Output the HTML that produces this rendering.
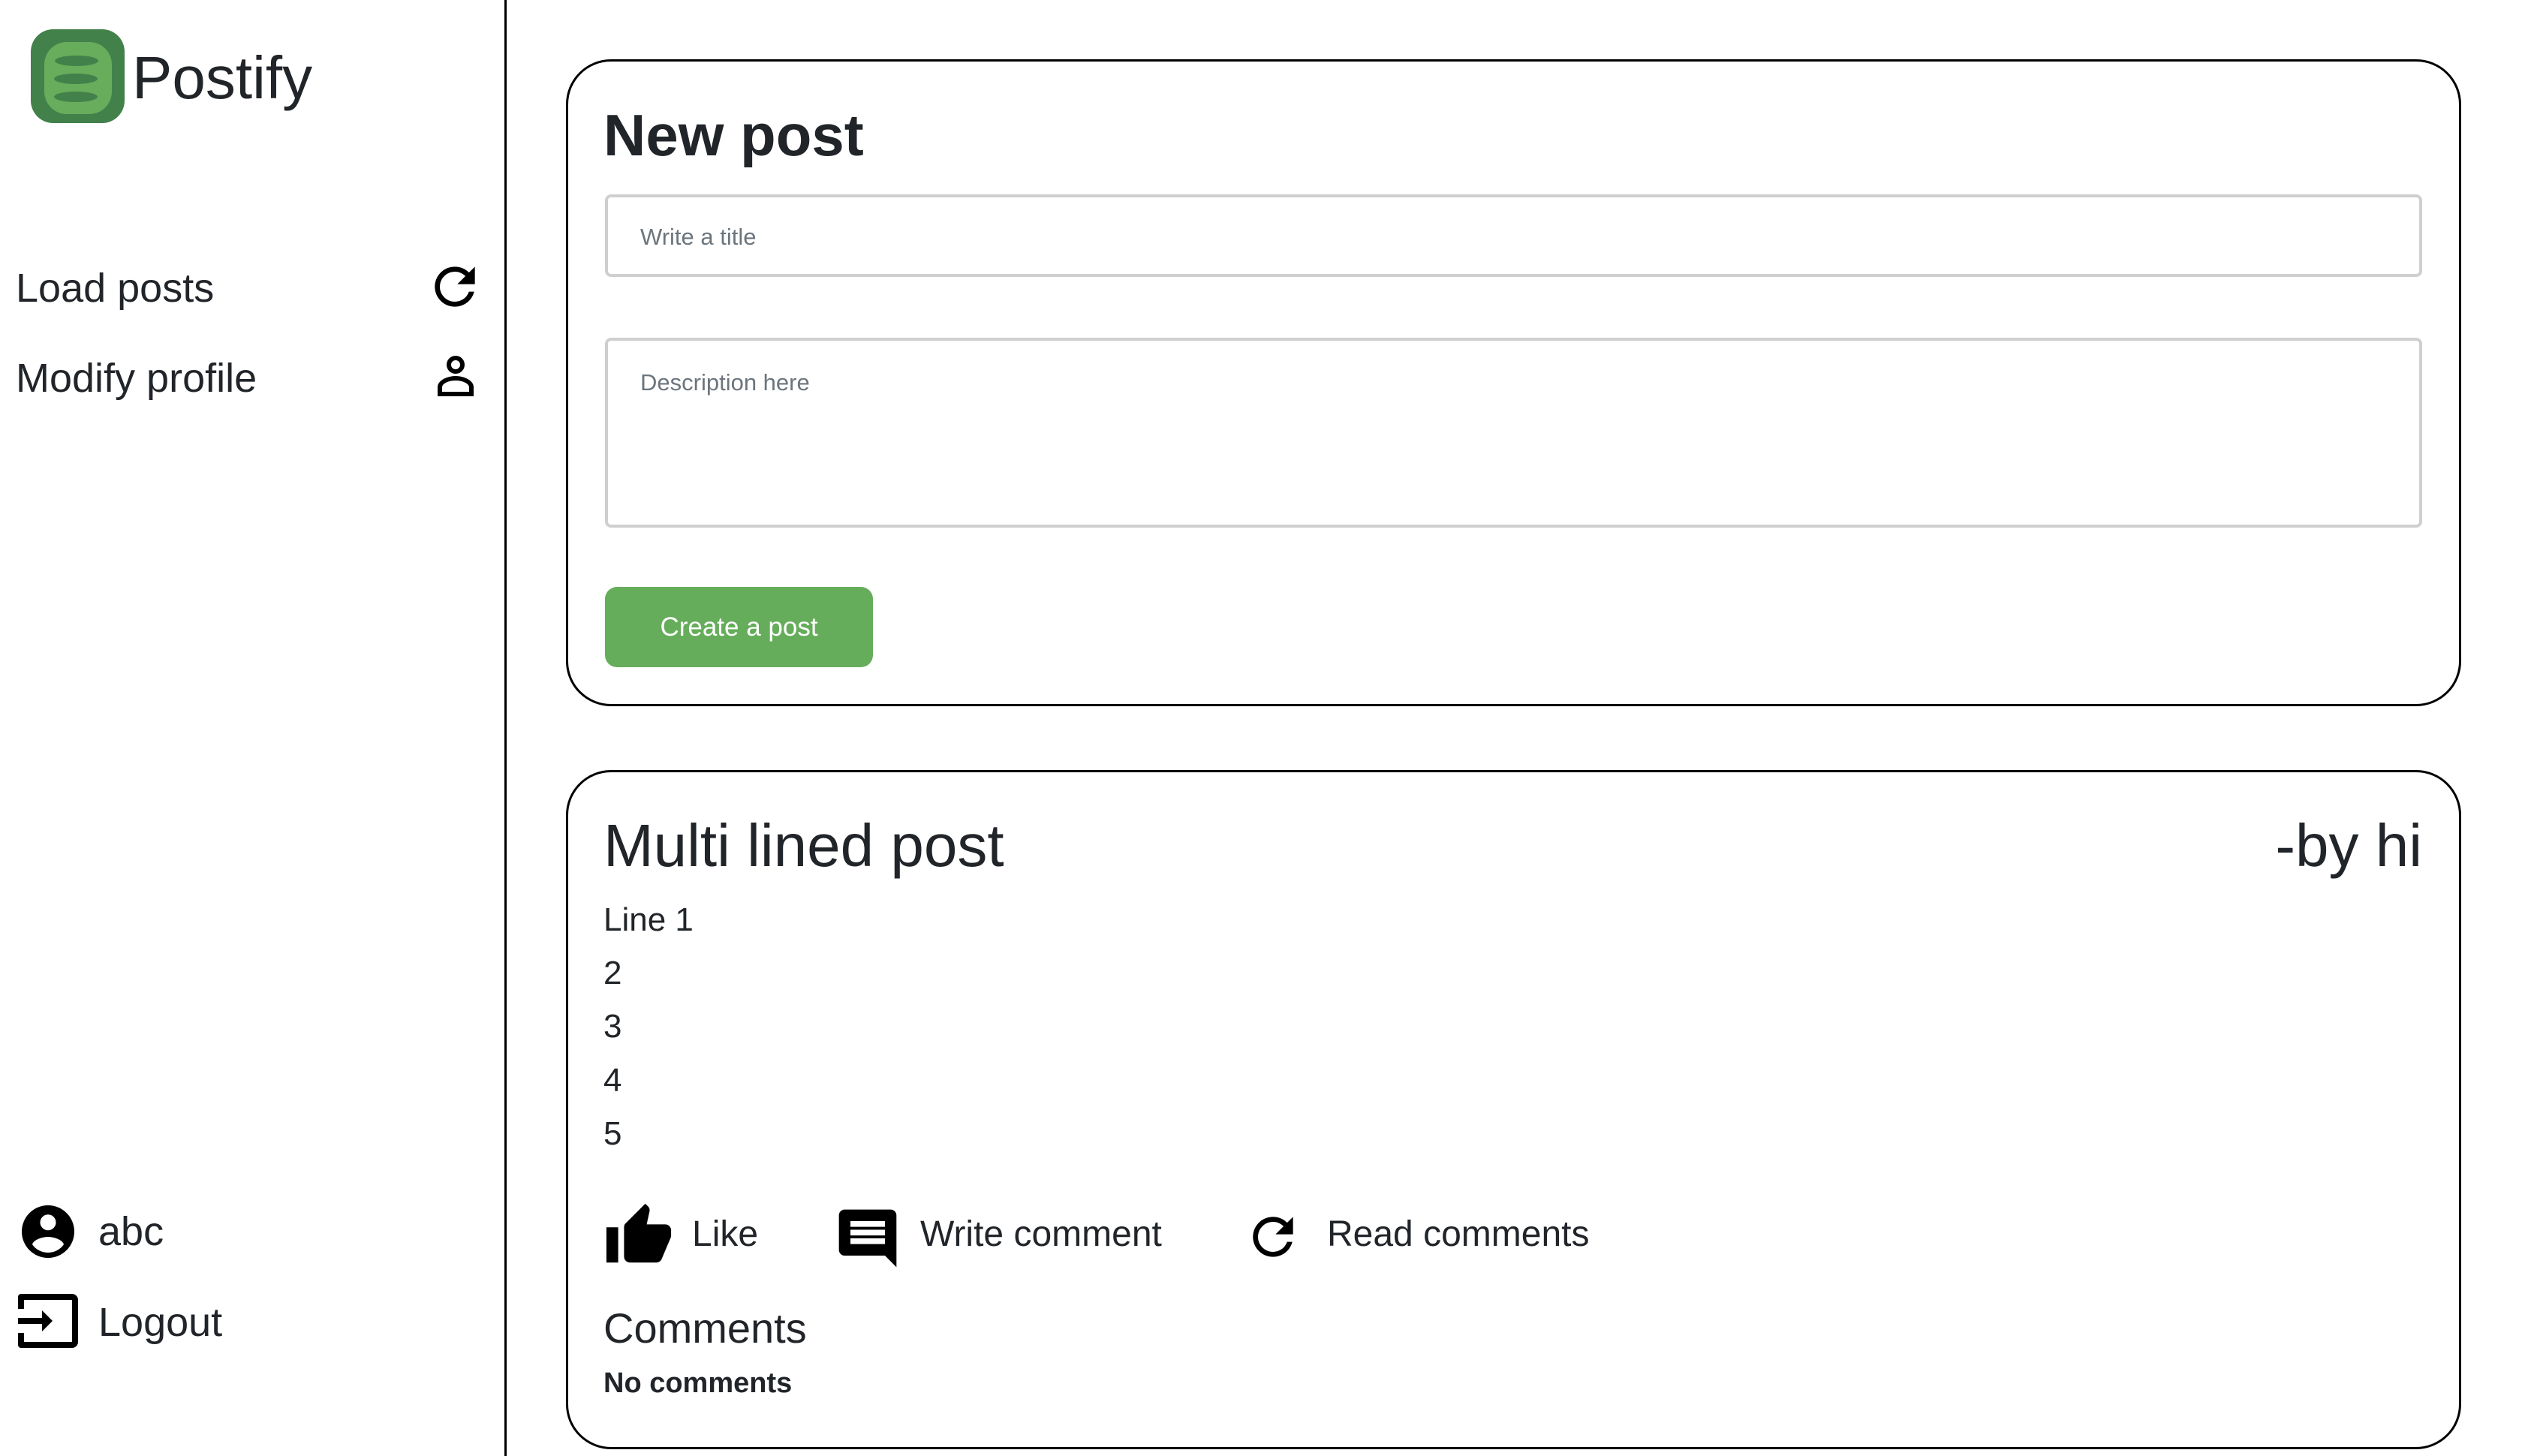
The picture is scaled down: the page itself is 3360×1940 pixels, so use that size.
<!DOCTYPE html>
<html><head><meta charset="utf-8"><style>
*{box-sizing:border-box;margin:0;padding:0}
body{width:3360px;height:1940px;position:relative;background:#fff;font-family:"Liberation Sans",sans-serif;color:#212529;overflow:hidden}
.a{position:absolute;white-space:nowrap}
.side{position:absolute;left:672px;top:0;width:3px;height:1940px;background:#000}
.card{position:absolute;left:754px;width:2525px;border:3px solid #000;border-radius:60px}
.inp{position:absolute;left:806px;width:2421px;border:4px solid #cfcfcf;border-radius:8px}
.ph{color:#6c757d;font-size:31px}
</style></head><body>
<svg class="a" style="left:41px;top:39px" width="125" height="125" viewBox="0 0 125 125">
<rect x="0" y="0" width="125" height="125" rx="30" fill="#43814b"/>
<rect x="18" y="17" width="90" height="96" rx="30" fill="#67ad5c"/>
<ellipse cx="61" cy="42" rx="29" ry="7" fill="#43814b"/>
<ellipse cx="60" cy="66" rx="29" ry="7" fill="#43814b"/>
<ellipse cx="60" cy="90" rx="29" ry="7" fill="#43814b"/>
</svg>
<div class="a" style="left:176px;top:56px;font-size:80px;line-height:96px">Postify</div>
<div class="a" style="left:21px;top:352px;font-size:54px;line-height:64px">Load posts</div>
<svg class="a" style="left:566px;top:342px" width="80" height="80" viewBox="0 0 24 24"><path d="M17.65 6.35A7.95 7.95 0 0 0 12 4a8 8 0 1 0 7.73 10h-2.08A6 6 0 1 1 12 6c1.66 0 3.14.69 4.22 1.78L13 11h7V4l-2.35 2.35z"/></svg>
<div class="a" style="left:21px;top:472px;font-size:54px;line-height:64px">Modify profile</div>
<svg class="a" style="left:571px;top:465px" width="72" height="72" viewBox="0 0 24 24"><path d="M12 3a4 4 0 1 0 0 8 4 4 0 0 0 0-8zm0 2a2 2 0 1 1 0 4 2 2 0 0 1 0-4zm0 7c-3.3 0-8 1.7-8 5v4h16v-4c0-3.3-4.7-5-8-5zm0 2c3 0 6 1.3 6 3v2H6v-2c0-1.7 3-3 6-3z"/></svg>
<svg class="a" style="left:22px;top:1599px" width="84" height="84" viewBox="0 0 24 24"><path d="M12 2a10 10 0 1 0 0 20 10 10 0 0 0 0-20zm0 3.5a3 3 0 1 1 0 6 3 3 0 0 1 0-6zM12 20c-2.5 0-4.7-1.2-6-3.1C6.5 15 10 14 12 14s5.5 1 6 2.9A7.3 7.3 0 0 1 12 20z"/></svg>
<div class="a" style="left:131px;top:1609px;font-size:54px;line-height:64px">abc</div>
<svg class="a" style="left:20px;top:1720px" width="88" height="80" viewBox="0 0 22 20"><path d="M2 1h17a2 2 0 0 1 2 2v14a2 2 0 0 1-2 2H2a1 1 0 0 1-1-1v-4h2v3h16V3H3v3H1V2a1 1 0 0 1 1-1zM1 9h8V6.5l3.5 3.5L9 13.5V11H1z"/></svg>
<div class="a" style="left:131px;top:1730px;font-size:54px;line-height:64px">Logout</div>
<div class="side"></div>

<div class="card" style="top:79px;height:862px"></div>
<div class="a" style="left:804px;top:132px;font-size:78px;line-height:96px;font-weight:bold">New post</div>
<div class="inp" style="top:259px;height:110px"><div class="a ph" style="left:43px;top:35px">Write a title</div></div>
<div class="inp" style="top:450px;height:253px"><div class="a ph" style="left:43px;top:38px">Description here</div></div>
<div class="a" style="left:806px;top:782px;width:357px;height:107px;background:#66ad5b;border-radius:16px;color:#fff;font-size:35px;line-height:107px;text-align:center">Create a post</div>

<div class="card" style="top:1026px;height:905px"></div>
<div class="a" style="left:804px;top:1079px;font-size:80px;line-height:96px">Multi lined post</div>
<div class="a" style="right:133px;top:1079px;font-size:80px;line-height:96px">-by hi</div>
<div class="a" style="left:804px;top:1200px;font-size:44px;line-height:52px">Line 1</div>
<div class="a" style="left:804px;top:1271px;font-size:44px;line-height:52px">2</div>
<div class="a" style="left:804px;top:1342px;font-size:44px;line-height:52px">3</div>
<div class="a" style="left:804px;top:1414px;font-size:44px;line-height:52px">4</div>
<div class="a" style="left:804px;top:1485px;font-size:44px;line-height:52px">5</div>
<svg class="a" style="left:804px;top:1600px" width="94" height="94" viewBox="0 0 24 24"><path d="M1 21h4V9H1v12zm22-11c0-1.1-.9-2-2-2h-6.3l1-4.6v-.3c0-.4-.2-.8-.4-1.1L14.2 1 7.6 7.6C7.2 7.9 7 8.4 7 9v10c0 1.1.9 2 2 2h9c.8 0 1.5-.5 1.8-1.2l3-7.1c.1-.2.2-.5.2-.7v-2z"/></svg>
<div class="a" style="left:922px;top:1617px;font-size:48px;line-height:56px">Like</div>
<svg class="a" style="left:1110px;top:1604px" width="92" height="92" viewBox="0 0 24 24"><path d="M21.99 4c0-1.1-.89-2-1.99-2H4c-1.1 0-2 .9-2 2v12c0 1.1.9 2 2 2h14l4 4-.01-18zM18 14H6v-2h12v2zm0-3H6V9h12v2zm0-3H6V6h12v2z"/></svg>
<div class="a" style="left:1226px;top:1617px;font-size:48px;line-height:56px">Write comment</div>
<svg class="a" style="left:1656px;top:1608px" width="80" height="80" viewBox="0 0 24 24"><path d="M17.65 6.35A7.95 7.95 0 0 0 12 4a8 8 0 1 0 7.73 10h-2.08A6 6 0 1 1 12 6c1.66 0 3.14.69 4.22 1.78L13 11h7V4l-2.35 2.35z"/></svg>
<div class="a" style="left:1768px;top:1617px;font-size:48px;line-height:56px">Read comments</div>
<div class="a" style="left:804px;top:1737px;font-size:56px;line-height:66px">Comments</div>
<div class="a" style="left:804px;top:1820px;font-size:38px;line-height:46px;font-weight:bold">No comments</div>
</body></html>
